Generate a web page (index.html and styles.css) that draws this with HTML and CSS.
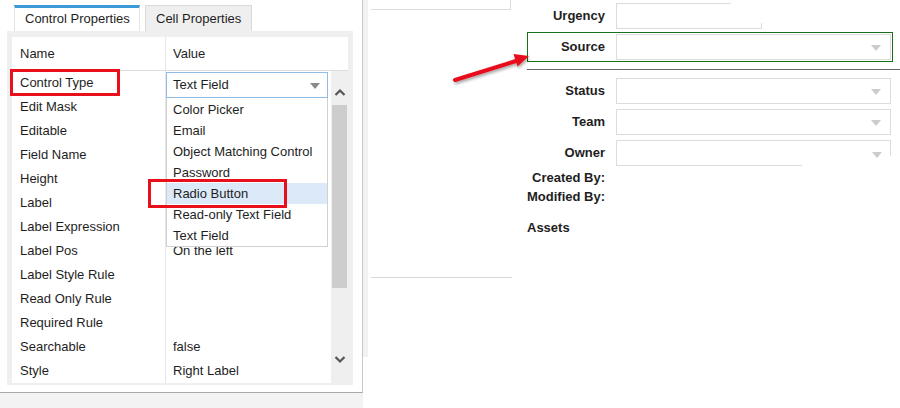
FILE: index.html
```
<!DOCTYPE html>
<html>
<head>
<meta charset="utf-8">
<link rel="stylesheet" href="styles.css">
</head>
<body>
<div class="page">
  <div class="leftcol">
    <div class="panel">
      <div class="tabs">
        <div class="tab active">Control Properties</div>
        <div class="tab">Cell Properties</div>
      </div>
      <div class="container">
        <div class="grid">
          <div class="thead">
            <div class="th name">Name</div>
            <div class="th val">Value</div>
          </div>
          <div class="tbody">
            <div class="rows">
              <div class="row"><div class="c n">Control Type</div><div class="c v"></div></div>
              <div class="row"><div class="c n">Edit Mask</div><div class="c v"></div></div>
              <div class="row"><div class="c n">Editable</div><div class="c v"></div></div>
              <div class="row"><div class="c n">Field Name</div><div class="c v"></div></div>
              <div class="row"><div class="c n">Height</div><div class="c v"></div></div>
              <div class="row"><div class="c n">Label</div><div class="c v"></div></div>
              <div class="row"><div class="c n">Label Expression</div><div class="c v"></div></div>
              <div class="row"><div class="c n">Label Pos</div><div class="c v">On the left</div></div>
              <div class="row"><div class="c n">Label Style Rule</div><div class="c v"></div></div>
              <div class="row"><div class="c n">Read Only Rule</div><div class="c v"></div></div>
              <div class="row"><div class="c n">Required Rule</div><div class="c v"></div></div>
              <div class="row"><div class="c n">Searchable</div><div class="c v">false</div></div>
              <div class="row"><div class="c n">Style</div><div class="c v">Right Label</div></div>
            </div>
            <div class="scroll">
              <svg class="chev up" width="12" height="17" viewBox="0 0 12 17"><polyline points="1.5,11 6,6.5 10.5,11" fill="none" stroke="#555" stroke-width="2.2"/></svg>
              <div class="thumb"></div>
              <svg class="chev down" width="12" height="17" viewBox="0 0 12 17"><polyline points="1.5,6 6,10.5 10.5,6" fill="none" stroke="#555" stroke-width="2.2"/></svg>
            </div>
          </div>
          <div class="select">
            <span>Text Field</span>
            <span class="caret dark"></span>
          </div>
          <div class="list">
            <div class="item">Color Picker</div>
            <div class="item">Email</div>
            <div class="item">Object Matching Control</div>
            <div class="item">Password</div>
            <div class="item hl">Radio Button</div>
            <div class="item">Read-only Text Field</div>
            <div class="item">Text Field</div>
          </div>
        </div>
      </div>
    </div>
    <div class="footer"></div>
  </div>
  <div class="strip"></div>
  <div class="middle">
    <div class="topbox"></div>
    <div class="midline"></div>
  </div>
  <div class="form">
    <div class="frow">
      <div class="lbl">Urgency</div>
      <div class="inp urgency"></div>
    </div>
    <div class="srcbox">
      <div class="frow">
        <div class="lbl src">Source</div>
        <div class="inp"><span class="caret light"></span></div>
      </div>
    </div>
    <div class="sep"></div>
    <div class="frow status">
      <div class="lbl">Status</div>
      <div class="inp"><span class="caret light"></span></div>
    </div>
    <div class="frow gap5">
      <div class="lbl">Team</div>
      <div class="inp"><span class="caret light"></span></div>
    </div>
    <div class="frow gap5">
      <div class="lbl">Owner</div>
      <div class="inp owner"><span class="caret light"></span></div>
    </div>
    <div class="trow first">Created By:</div>
    <div class="trow">Modified By:</div>
    <div class="assets">Assets</div>
  </div>

  <div class="mark mark1"></div>
  <div class="mark mark2"></div>
  <svg class="arrow" width="900" height="408" viewBox="0 0 900 408">
    <defs>
      <filter id="sh" x="-20%" y="-50%" width="140%" height="200%">
        <feDropShadow dx="1" dy="2" stdDeviation="1.5" flood-color="#000" flood-opacity="0.35"/>
      </filter>
    </defs>
    <g filter="url(#sh)">
      <line x1="455" y1="80" x2="516" y2="61" stroke="#e8101a" stroke-width="4" stroke-linecap="round"/>
      <polygon points="529,56 517.5,66.5 513.5,54" fill="#e8101a"/>
    </g>
  </svg>
</div>
</body>
</html>
```
FILE: styles.css
```
* { box-sizing: border-box; }
html, body { margin: 0; padding: 0; background: #fff; }
body {
  font-family: "Liberation Sans", Arial, sans-serif;
  font-size: 13px;
  color: #1e1e1e;
}
.page {
  position: relative;
  width: 900px;
  height: 408px;
  display: flex;
  overflow: hidden;
}
.leftcol {
  width: 363px;
  display: flex;
  flex-direction: column;
}
.panel {
  width: 363px;
  height: 393px;
  border-right: 1px solid #c9c9c9;
  border-bottom: 1px solid #a9a9a9;
  background: #fff;
}
.footer {
  flex: 1;
  background: #f3f3f3;
}
.tabs {
  display: flex;
  gap: 5px;
  padding: 5px 0 0 14px;
  height: 31px;
}
.tab {
  height: 26px;
  padding: 3px 0 0 10px;
  line-height: 19px;
  background: #efefef;
  border: 1px solid #d9d9d9;
  border-bottom: none;
  width: 107px;
}
.tab.active {
  width: 126px;
  background: #fff;
  border-top: 3px solid #3d9ad9;
  border-left: 1px solid #e4e4e4;
  border-right: 1px solid #e4e4e4;
  padding-top: 1px;
}
.container {
  margin-left: 7px;
  width: 346px;
  height: 354px;
  background: #efefef;
  padding: 6px 5px 2px 5px;
}
.grid {
  position: relative;
  width: 336px;
}
.thead {
  display: flex;
  height: 34px;
  background: #fff;
  border-bottom: 1px solid #dedede;
}
.th {
  line-height: 34px;
}
.th.name {
  width: 153px;
  padding-left: 8px;
}
.th.val {
  flex: 1;
  border-left: 1px solid #e6e6e6;
  padding-left: 7px;
}
.tbody {
  display: flex;
  height: 312px;
}
.rows {
  width: 319px;
  background: #fff;
}
.row {
  display: flex;
  height: 24px;
  line-height: 24px;
}
.c.n {
  width: 153px;
  padding-left: 8px;
}
.c.v {
  flex: 1;
  border-left: 1px solid #e8e8e8;
  padding-left: 7px;
}
.scroll {
  width: 17px;
  display: flex;
  flex-direction: column;
  align-items: center;
  padding-top: 13px;
}
.chev { display: block; flex: none; }
.thumb {
  margin-top: 4px;
  width: 15px;
  height: 183px;
  background: #cdcdcd;
  flex: none;
}
.chev.down { margin-top: 63px; }

.select {
  position: absolute;
  left: 154px;
  top: 35px;
  width: 162px;
  height: 26px;
  border: 1px solid #8fbbe9;
  background: #fff;
  padding-left: 6px;
  line-height: 24px;
}
.caret {
  position: absolute;
  right: 8px;
  top: 50%;
  margin-top: -2px;
  width: 0;
  height: 0;
  border-left: 5px solid transparent;
  border-right: 5px solid transparent;
}
.caret.dark { border-top: 6px solid #8a8a8a; right: 7px; }
.caret.light { border-top: 6px solid #cccccc; right: 9px; }
.list {
  position: absolute;
  left: 154px;
  top: 61px;
  width: 162px;
  background: #fff;
  border: 1px solid #d0d0d0;
  border-top: none;
  padding-top: 1px;
}
.item {
  height: 21px;
  line-height: 21px;
  padding-left: 6px;
}
.item.hl { background: #dce9f8; }

.strip {
  width: 5px;
  height: 357px;
  background: #f2f2f2;
}
.middle {
  width: 143px;
  padding-left: 3px;
}
.topbox {
  width: 140px;
  height: 10px;
  border-right: 1px solid #dcdcdc;
  border-bottom: 1px solid #dcdcdc;
}
.midline {
  margin-top: 267px;
  width: 141px;
  border-top: 1px solid #d9d9d9;
}

.form {
  flex: 1;
  padding: 3px 0 0 16px;
}
.frow {
  display: flex;
  align-items: center;
  gap: 11px;
  height: 26px;
}
.lbl {
  width: 78px;
  text-align: right;
  font-weight: bold;
  padding-bottom: 2px;
}
.lbl.src { width: 77px; }
.inp {
  position: relative;
  width: 275px;
  height: 26px;
  border: 1px solid #dcdcdc;
  background: #fff;
}
.inp.urgency {
  width: 146px;
  border-top: none;
  border-right: none;
}
.inp.urgency::before {
  content: "";
  position: absolute;
  left: -1px;
  top: 0;
  width: 115px;
  border-top: 1px solid #dcdcdc;
}
.inp.urgency::after {
  content: "";
  position: absolute;
  right: 0;
  bottom: -1px;
  height: 6px;
  border-right: 1px solid #dcdcdc;
}
.inp.owner {
  border-bottom: none;
  border-right: none;
}
.inp.owner::before {
  content: "";
  position: absolute;
  left: -1px;
  bottom: 0;
  width: 186px;
  border-bottom: 1px solid #dcdcdc;
}
.inp.owner::after {
  content: "";
  position: absolute;
  right: 0;
  top: -1px;
  height: 16px;
  border-right: 1px solid #dcdcdc;
}
.srcbox {
  margin-top: 3px;
  width: 366px;
  border: 1px solid #17701a;
  padding: 1px 0 1px 0;
}
.sep {
  margin-top: 7px;
  border-top: 1px solid #666;
}
.frow.status { margin-top: 8px; }
.frow.gap5 { margin-top: 5px; }
.trow {
  width: 78px;
  text-align: right;
  font-weight: bold;
  line-height: 19px;
  white-space: nowrap;
}
.trow.first { margin-top: 2px; }
.assets {
  margin-top: 12px;
  line-height: 19px;
  font-weight: bold;
}

.mark {
  position: absolute;
  border: 3px solid #e8101a;
}
.mark1 { left: 10px; top: 69px; width: 110px; height: 27px; }
.mark2 { left: 148px; top: 179px; width: 139px; height: 29px; }
.arrow {
  position: absolute;
  left: 0;
  top: 0;
  pointer-events: none;
}
```
